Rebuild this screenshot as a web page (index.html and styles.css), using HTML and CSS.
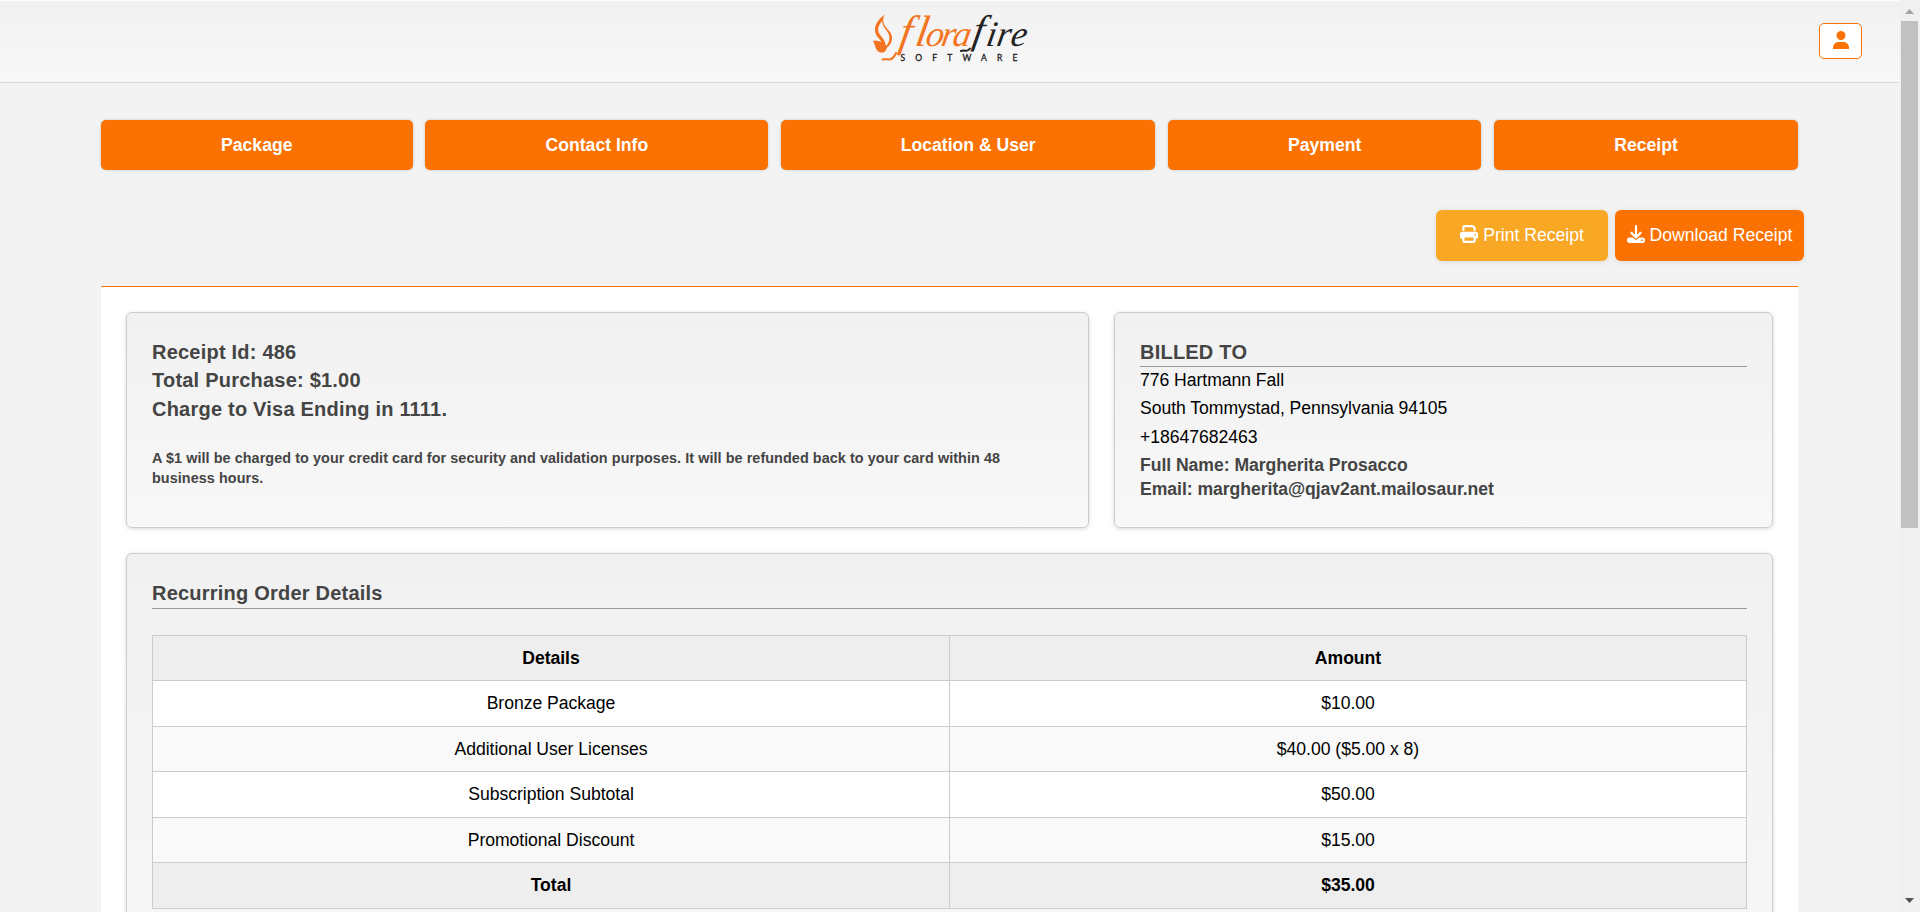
FILE: index.html
```html
<!DOCTYPE html>
<html lang="en">
<head>
<meta charset="utf-8">
<title>Florafire Software - Receipt</title>
<link rel="stylesheet" href="styles.css">
</head>
<body>
<div class="window">
  <div class="page">
    <header class="header">
      <svg class="logo" width="179" height="72" viewBox="860 2 179 72" role="img" aria-label="florafire software">
        <path class="flame" d="M884.500 14.500C879 19 874.500 24 875 30.500C875.200 35 878 37 880.500 40.500C882 43 883 46 882.500 50C888 48 892.500 43.500 892 37C891.500 31.500 886 28.500 884 24C882.700 21 883 17.500 884.500 14.500ZM882.200 21C882 27 887.500 30 889 35C890 39 889 43.500 885.500 46.500C886 41 882 37.500 879.500 34C876.800 30 878.500 25 882.200 21Z" fill-rule="evenodd"/>
        <path class="flame" d="M873 41C878 40 885.500 42 886.500 47C887.200 50.500 884.500 53 880.500 52.500C875 51.500 875.500 44.500 873 41Z"/>
        <path class="swash" d="M896 53C894 57.500 891.500 59.500 889 59.500C886.500 59.600 885 58.800 882.500 59.500"/>
        <path class="swash swash-dark" d="M970 48.500C968.500 50.500 966.500 51 965 50.700C963.500 50.400 962.500 50.300 961 51"/>
        <g transform="translate(8.110 0) skewX(-10)">
          <text class="word word-orange" y="46" x="898 914 924.500 940 951.500"><tspan class="tall-letter">fl</tspan>ora</text>
          <text class="word word-dark" y="43 46 46 46" x="971 985 995.500 1009.500"><tspan class="mid-letter">f</tspan>ire</text>
        </g>
        <text class="sub" x="900.500" y="60.500" textLength="117">SOFTWARE</text>
      </svg>
      <button class="user" aria-label="Account">
        <svg width="16" height="18" viewBox="0 0 16 18"><circle cx="8" cy="4.500" r="4.500"/><path d="M0 18V17C0 13.500 2.500 11 5.500 11H10.500C13.500 11 16 13.500 16 17V18Z"/></svg>
      </button>
    </header>
    <nav class="steps">
      <a class="step">Package</a>
      <a class="step">Contact Info</a>
      <a class="step">Location &amp; User</a>
      <a class="step">Payment</a>
      <a class="step">Receipt</a>
    </nav>
    <div class="actions">
      <button class="action print">
        <svg width="18" height="18" viewBox="0 0 512 512"><path d="M128 0C92.700 0 64 28.700 64 64v96h64V64H354.700L384 93.300V160h64V93.300c0-17-6.700-33.300-18.700-45.300L400 18.700C388 6.700 371.700 0 354.700 0H128zM384 352v32 64H128V384 368 352H384zm64 32h32c17.700 0 32-14.300 32-32V256c0-35.300-28.700-64-64-64H64c-35.300 0-64 28.700-64 64v96c0 17.700 14.300 32 32 32H64v64c0 35.300 28.700 64 64 64H384c35.300 0 64-28.700 64-64V384zM432 248a24 24 0 1 1 0 48 24 24 0 1 1 0-48z"/></svg>
        <span>Print Receipt</span>
      </button>
      <button class="action download">
        <svg width="18" height="18" viewBox="0 0 512 512"><path d="M288 32c0-17.700-14.300-32-32-32s-32 14.300-32 32V274.700l-73.400-73.400c-12.500-12.500-32.800-12.500-45.300 0s-12.500 32.800 0 45.300l128 128c12.500 12.500 32.800 12.500 45.300 0l128-128c12.500-12.500 12.500-32.800 0-45.300s-32.800-12.500-45.300 0L288 274.700V32zM64 352c-35.300 0-64 28.700-64 64v32c0 35.300 28.700 64 64 64H448c35.300 0 64-28.700 64-64V416c0-35.300-28.700-64-64-64H346.500l-45.300 45.300c-25 25-65.500 25-90.500 0L165.500 352H64zm368 56a24 24 0 1 1 0 48 24 24 0 1 1 0-48z"/></svg>
        <span>Download Receipt</span>
      </button>
    </div>
    <main class="receipt">
      <div class="summary">
        <section class="card">
          <h2 class="line">Receipt Id: 486</h2>
          <h2 class="line">Total Purchase: $1.00</h2>
          <h2 class="line">Charge to Visa Ending in 1111.</h2>
          <p class="note">A $1 will be charged to your credit card for security and validation purposes. It will be refunded back to your card within 48<br>business hours.</p>
        </section>
        <section class="card">
          <h2 class="title">BILLED TO</h2>
          <div class="billing">
            <p class="address">776 Hartmann Fall</p>
            <p class="address">South Tommystad, Pennsylvania 94105</p>
            <p class="address">+18647682463</p>
            <p class="contact">Full Name: Margherita Prosacco</p>
            <p class="contact">Email: margherita@qjav2ant.mailosaur.net</p>
          </div>
        </section>
      </div>
      <section class="card order">
        <h2 class="title">Recurring Order Details</h2>
        <table class="details">
          <tr class="strong"><th>Details</th><th>Amount</th></tr>
          <tr class="tall"><td>Bronze Package</td><td>$10.00</td></tr>
          <tr class="alt"><td>Additional User Licenses</td><td>$40.00 ($5.00 x 8)</td></tr>
          <tr class="tall"><td>Subscription Subtotal</td><td>$50.00</td></tr>
          <tr class="alt"><td>Promotional Discount</td><td>$15.00</td></tr>
          <tr class="strong tall"><th>Total</th><th>$35.00</th></tr>
        </table>
      </section>
    </main>
  </div>
  <div class="scrollbar">
    <svg width="9" height="5" viewBox="0 0 9 5"><path d="M0 5L4.500 0L9 5Z" fill="#a3a3a3"/></svg>
    <div class="thumb"></div>
    <svg class="down" width="9" height="5" viewBox="0 0 9 5"><path d="M0 0L4.500 5L9 0Z" fill="#505050"/></svg>
  </div>
</div>
</body>
</html>
```
FILE: styles.css
```css
* { box-sizing: border-box; }
body {
  margin: 0;
  font: 17.6px/28.6px "Liberation Sans", Arial, sans-serif;
  color: #000;
  background: #f3f3f3;
}
h2, p { margin: 0; white-space: nowrap; }
button { font: inherit; margin: 0; }
.window { display: flex; height: 912px; overflow: hidden; }
.page { width: 1899px; height: 912px; overflow: hidden; }
.header {
  height: 83px;
  display: grid;
  grid-template-columns: 1fr 179px 1fr;
  align-items: start;
  padding-top: 1px;
  border-top: 1px solid #fff;
  border-bottom: 1px solid #d9d9d9;
  background: linear-gradient(#f1f1f1, #f8f8f8);
}
.logo { grid-column: 2; overflow: visible; }
.flame { fill: #f47521; }
.swash { fill: none; stroke: #f47521; stroke-width: 2; stroke-linecap: round; }
.swash-dark { stroke: #222; }
.word { font: italic 36px "Liberation Serif", serif; }
.tall-letter { font-size: 44px; }
.mid-letter { font-size: 40px; }
.word-orange { fill: #f47521; }
.word-dark { fill: #222; }
.sub { font: 8.500px "Lato", sans-serif; fill: #222; stroke: #222; stroke-width: .3; }
.user {
  grid-column: 3;
  justify-self: end;
  margin: 21px 37px 0 0;
  width: 43px;
  height: 36px;
  padding: 0 0 2px;
  display: flex;
  align-items: center;
  justify-content: center;
  border: 1px solid #fb7203;
  border-radius: 5px;
  background: #fff;
  fill: #fb7203;
}
.steps {
  display: grid;
  grid-template-columns: 311.5px 343px 374px 313px 304px;
  justify-content: space-between;
  margin: 37px 101px 0;
}
.step {
  height: 50px;
  line-height: 50px;
  text-align: center;
  font-weight: bold;
  color: #fff;
  background: #fb7203;
  border-radius: 5px;
  box-shadow: 0 0 3px rgba(0, 0, 0, .2);
}
.actions { display: flex; justify-content: flex-end; gap: 7px; margin: 40px 95px 0 0; }
.action {
  height: 51px;
  padding: 0;
  display: flex;
  align-items: center;
  justify-content: center;
  gap: 5px;
  border: 0;
  border-radius: 6px;
  color: #fff;
  fill: #fff;
  white-space: nowrap;
  box-shadow: 0 1px 6px rgba(0, 0, 0, .1);
}
.action svg { margin-bottom: 3px; }
.print { width: 172px; background: #f9a825; }
.download { width: 189px; background: #fb7203; }
.receipt { margin: 25px 101px 0; padding: 25px; border-top: 1px solid #fb7203; background: #fff; }
.summary { display: grid; grid-template-columns: 963px 659px; gap: 25px; }
.card {
  height: 216px;
  padding: 25px;
  border: 1px solid #ccc;
  border-radius: 6px;
  background: linear-gradient(#f1f1f1, #f8f8f8);
  box-shadow: 0 1px 4px rgba(0, 0, 0, .15);
}
.line, .title { font-size: 20px; letter-spacing: .22px; color: #444; }
.line { line-height: 28.400px; }
.note { margin-top: 24.300px; font-size: 14.400px; line-height: 20px; letter-spacing: .065px; font-weight: bold; color: #444; }
.title { height: 29px; line-height: 28.500px; border-bottom: 1px solid #999; }
.billing { margin-top: -1px; letter-spacing: -.04px; }
.address { line-height: 28.300px; }
.contact { font-weight: bold; line-height: 24px; color: #444; }
.address + .contact { margin-top: 2px; }
.order { height: 480px; margin-top: 25px; }
.order .title { height: 30px; }
.details { width: 100%; margin-top: 26px; table-layout: fixed; border-collapse: collapse; background: #fff; text-align: center; letter-spacing: -.03px; }
.details tr { height: 45px; }
.details .tall { height: 46px; }
.details th, .details td { padding: 0; border: 1px solid #ccc; }
.strong { background: #eee; }
.alt { background: #f9f9f9; }
.scrollbar { flex: 1; display: flex; flex-direction: column; align-items: center; padding: 9px 0 9px; background: #f0f0f0; }
.thumb { width: 17px; height: 507px; margin-top: 7px; background: #c1c1c1; }
.down { margin-top: auto; }
```
